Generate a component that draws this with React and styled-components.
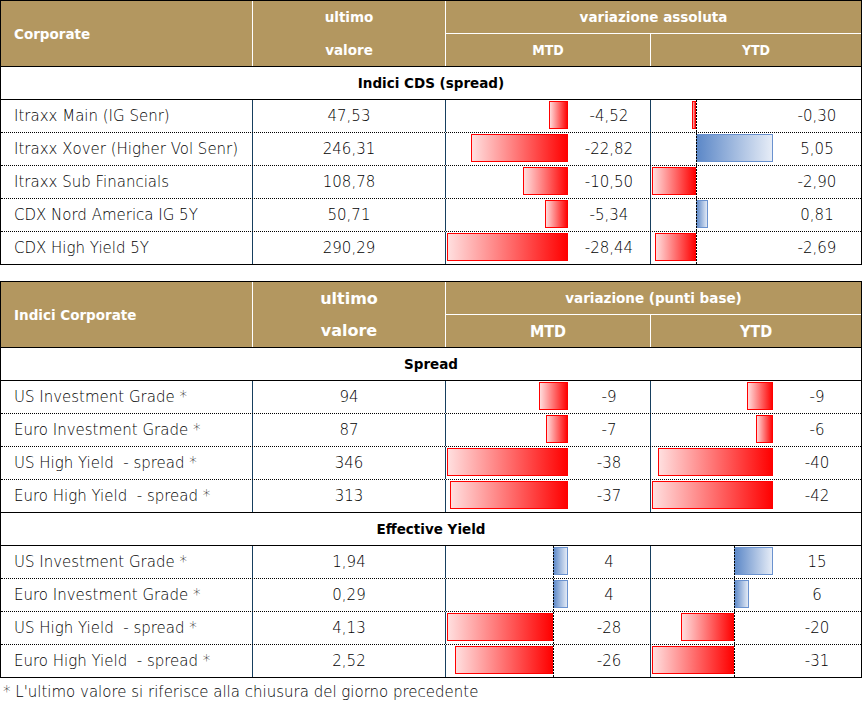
import React, { useId } from "react";
import styled, { createGlobalStyle } from "styled-components";

const GlobalStyle = createGlobalStyle`
  html, body { margin: 0; padding: 0; background: #fff; }
  body { font-family: "DejaVu Sans", "Liberation Sans", sans-serif; color: #000; }
  * { box-sizing: border-box; }
`;

const GOLD = "#b39760";
const NAVY = "#173f5f";

const Page = styled.div`
    width: 862px;
    display: flex;
    flex-direction: column;
`;

const Table = styled.div`
    width: 862px;
    border: 1px solid #000;
    border-bottom: none;

    & + & {
        margin-top: 16px;
    }
`;

const Head = styled.div`
    display: grid;
    grid-template-columns: 251px 192px 204px 210px;
    grid-template-rows: 32px 32px;
    gap: 1px;
    background: #fff;
    border-bottom: 1px solid #000;
`;

const HeadCell = styled.div`
    grid-column: ${p => p.$col};
    grid-row: ${p => p.$row};
    background: ${GOLD};
    color: #fff;
    font-weight: bold;
    font-size: ${p => p.$size || 13.5}px;
    display: flex;
    align-items: center;
    justify-content: ${p => (p.$left ? "flex-start" : "center")};
    padding-left: ${p => (p.$left ? 13 : 0)}px;
    ${p => p.$narrow && `
        font-family: "DejaVu Sans Condensed", "DejaVu Sans", sans-serif;
        font-stretch: condensed;
    `}
`;

const Lines = styled.div`
    height: 100%;
    display: grid;
    grid-template-rows: 1fr 1fr;
    align-items: center;
    justify-items: center;
`;

const SectionRow = styled.div`
    height: 33px;
    border-bottom: 1px solid #000;
    display: flex;
    align-items: center;
    justify-content: center;
    font-weight: bold;
    font-size: 13.5px;
`;

const Row = styled.div`
    display: grid;
    grid-template-columns: 252px 193px 122px 83px 122px 88px;
    height: 33px;
    border-bottom: 1px ${p => (p.$last ? "solid" : "dotted")} #000;
    font-size: 15px;
    font-weight: 200;
`;

const NameCell = styled.div`
    display: flex;
    align-items: center;
    padding-left: 13px;
    border-right: 1px solid ${NAVY};
    white-space: pre;
`;

const ValueCell = styled.div`
    display: flex;
    align-items: center;
    justify-content: center;
    border-right: ${p => (p.$divider ? `1px solid ${NAVY}` : "none")};
`;

const BarCell = styled.div`
    height: 32px;
    overflow: hidden;

    svg {
        display: block;
    }
`;

const Note = styled.p`
    margin: 0;
    padding-left: 3px;
    font-size: 15px;
    font-weight: 200;
    line-height: 28px;
`;

function DataBar({ value, min, max }) {
    const id = useId();
    const span = Math.max(0, max) - Math.min(0, min);
    const scale = 121 / span;
    const axis = 1 + scale * -Math.min(0, min);
    const len = Math.abs(value) * scale;
    const neg = value < 0;
    const left = Math.round(neg ? axis - len : axis);
    const right = Math.round(neg ? axis : axis + len);
    const w = Math.max(right - left, 2);
    const mixed = min < 0 && max > 0;
    const ax = Math.round(axis);

    return (
        <svg width="122" height="32">
            <defs>
                <linearGradient id={id} x1="0" y1="0" x2="1" y2="0">
                    {neg ? (
                        <>
                            <stop offset="0" stopColor="#ffe0e0" />
                            <stop offset="1" stopColor="#ff0000" />
                        </>
                    ) : (
                        <>
                            <stop offset="0" stopColor="#5b87c7" />
                            <stop offset="1" stopColor="#e7edf7" />
                        </>
                    )}
                </linearGradient>
            </defs>
            <rect
                x={left + 0.5}
                y="1.5"
                width={w - 1}
                height="27"
                fill={`url(#${id})`}
                stroke={neg ? "#ff0000" : "#6a92cf"}
                strokeWidth="1"
            />
            {mixed && (
                <line x1={ax + 0.5} y1="0" x2={ax + 0.5} y2="32" stroke="#000" strokeWidth="1" strokeDasharray="2 1" />
            )}
        </svg>
    );
}

const fmt = (v, d) => v.toFixed(d).replace(".", ",");

const cds = [
    ["Itraxx Main (IG Senr)", "47,53", -4.52, -0.3],
    ["Itraxx Xover (Higher Vol Senr)", "246,31", -22.82, 5.05],
    ["Itraxx Sub Financials", "108,78", -10.5, -2.9],
    ["CDX Nord America IG 5Y", "50,71", -5.34, 0.81],
    ["CDX High Yield 5Y", "290,29", -28.44, -2.69],
];

const spread = [
    ["US Investment Grade *", "94", -9, -9],
    ["Euro Investment Grade *", "87", -7, -6],
    ["US High Yield  - spread *", "346", -38, -40],
    ["Euro High Yield  - spread *", "313", -37, -42],
];

const yieldRows = [
    ["US Investment Grade *", "1,94", 4, 15],
    ["Euro Investment Grade *", "0,29", 4, 6],
    ["US High Yield  - spread *", "4,13", -28, -20],
    ["Euro High Yield  - spread *", "2,52", -26, -31],
];

const Group = ({ title, rows, decimals }) => {
    const mtd = rows.map(r => r[2]);
    const ytd = rows.map(r => r[3]);
    return (
        <>
            <SectionRow>{title}</SectionRow>
            {rows.map((r, i) => (
                <Row key={r[0] + i} $last={i === rows.length - 1}>
                    <NameCell>{r[0]}</NameCell>
                    <ValueCell $divider>{r[1]}</ValueCell>
                    <BarCell>
                        <DataBar value={r[2]} min={Math.min(...mtd)} max={Math.max(...mtd)} />
                    </BarCell>
                    <ValueCell $divider>{fmt(r[2], decimals)}</ValueCell>
                    <BarCell>
                        <DataBar value={r[3]} min={Math.min(...ytd)} max={Math.max(...ytd)} />
                    </BarCell>
                    <ValueCell>{fmt(r[3], decimals)}</ValueCell>
                </Row>
            ))}
        </>
    );
};

const TableHead = ({ title, change, big }) => (
    <Head>
        <HeadCell $col="1" $row="1 / 3" $left>{title}</HeadCell>
        <HeadCell $col="2" $row="1 / 3" $size={big ? 16 : 13.5}>
            <Lines>
                <span>ultimo</span>
                <span>valore</span>
            </Lines>
        </HeadCell>
        <HeadCell $col="3 / 5" $row="1">{change}</HeadCell>
        <HeadCell $col="3" $row="2" $narrow $size={big ? 16 : 14}>MTD</HeadCell>
        <HeadCell $col="4" $row="2" $narrow $size={big ? 16 : 14}>YTD</HeadCell>
    </Head>
);

export default function App() {
    return (
        <Page>
            <GlobalStyle />
            <Table>
                <TableHead title="Corporate" change="variazione assoluta" />
                <Group title="Indici CDS (spread)" rows={cds} decimals={2} />
            </Table>
            <Table>
                <TableHead title="Indici Corporate" change="variazione (punti base)" big />
                <Group title="Spread" rows={spread} decimals={0} />
                <Group title="Effective Yield" rows={yieldRows} decimals={0} />
            </Table>
            <Note>* L'ultimo valore si riferisce alla chiusura del giorno precedente</Note>
        </Page>
    );
}
